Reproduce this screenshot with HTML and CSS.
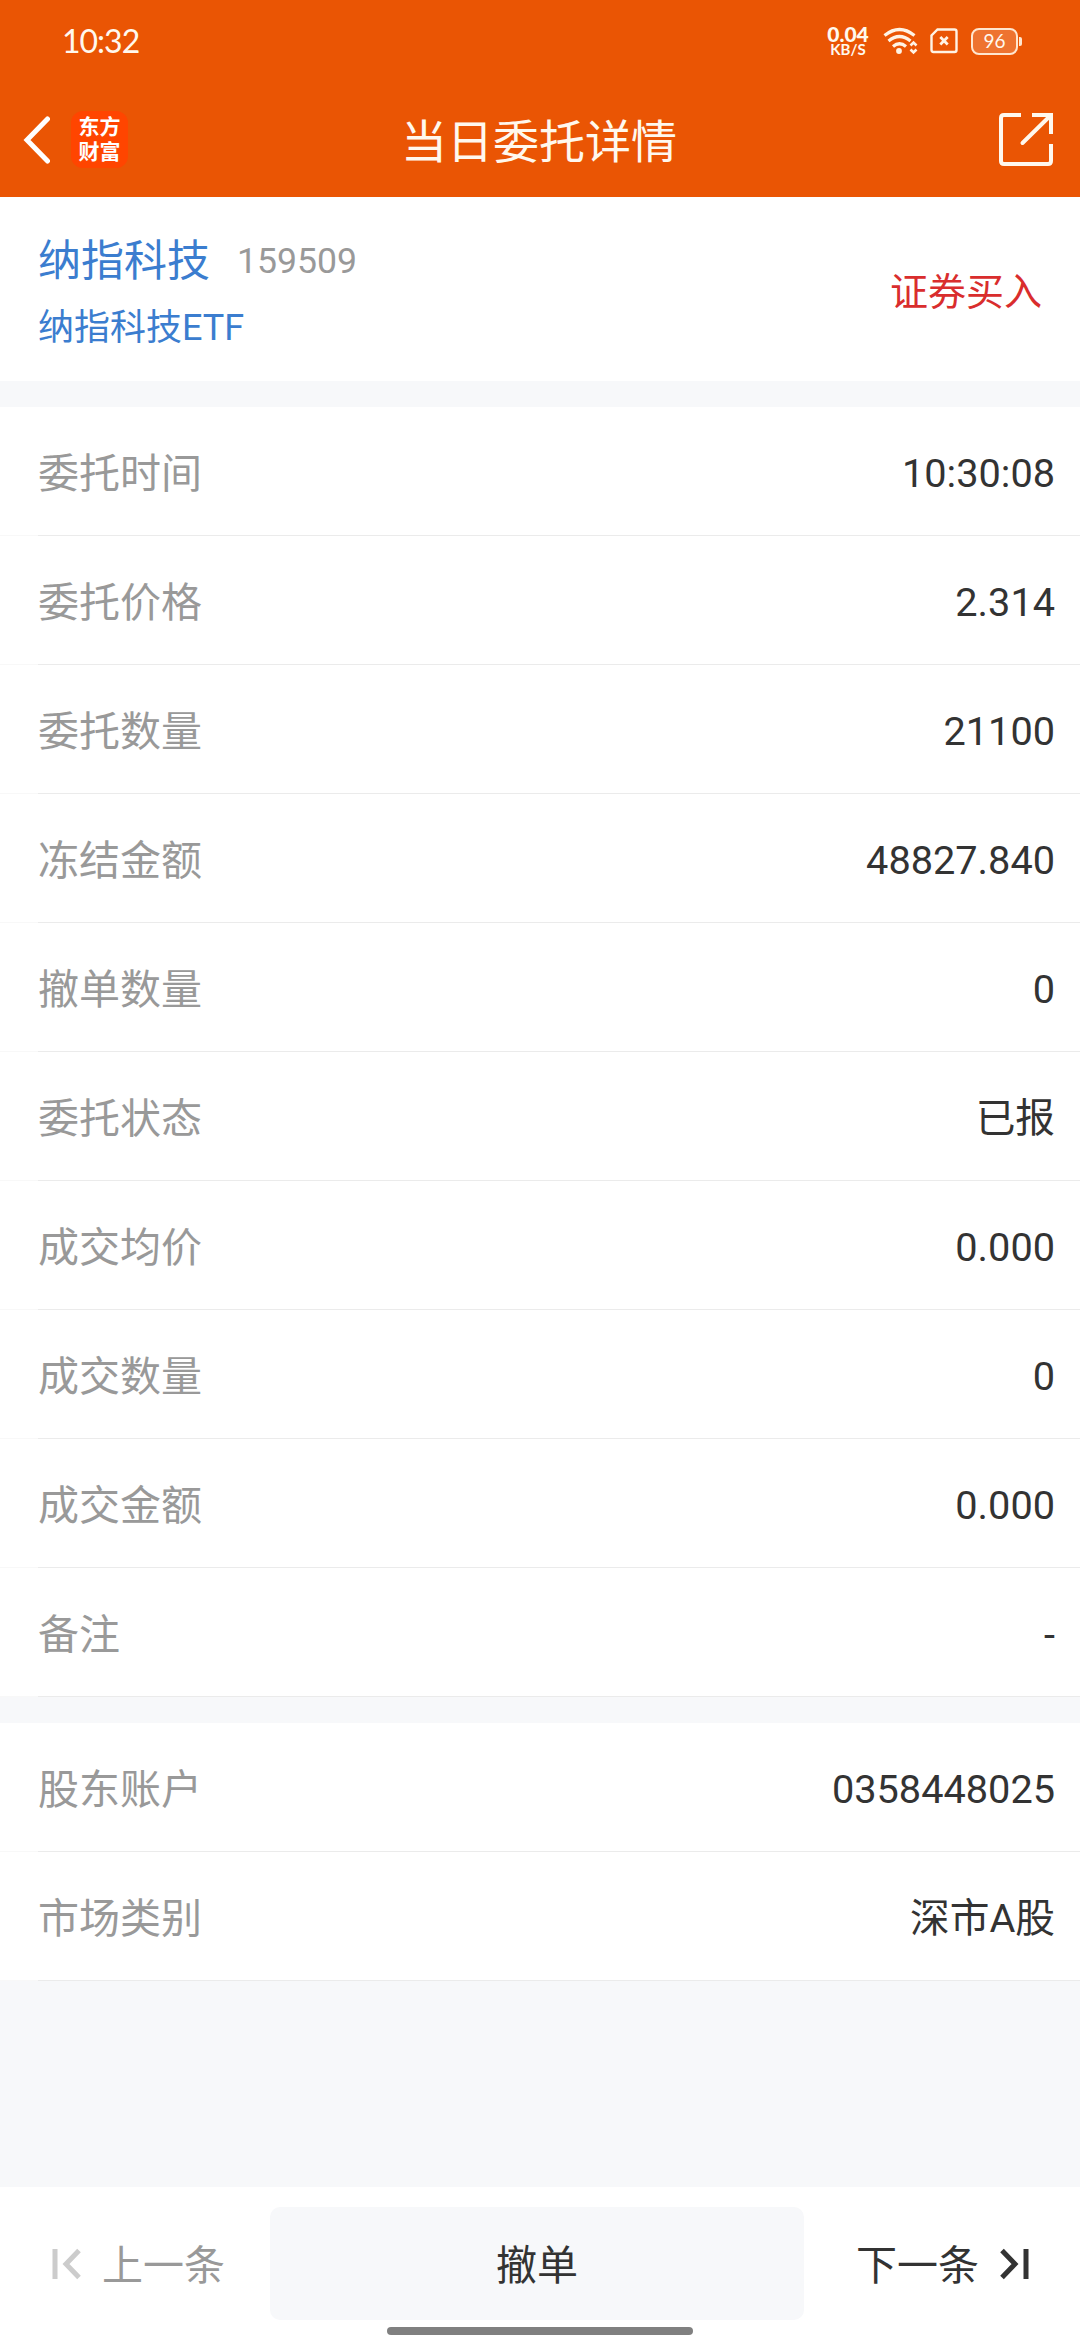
FILE: index.html
```html
<!DOCTYPE html>
<html lang="zh-CN">
<head>
  <meta charset="UTF-8">
  <meta name="viewport" content="width=device-width, initial-scale=1.0">
  <title>当日委托详情</title>
  <link rel="stylesheet" href="styles.css">
</head>
<body>
  <header class="header">
    <div class="status-bar">
      <span class="clock">10:32</span>
      <div class="status-icons">
        <div class="speed"><b>0.04</b><span>KB/S</span></div>
        <svg class="wifi" width="36" height="28" viewBox="0 0 36 28" fill="none" stroke="#fff3e4" stroke-width="3.2">
          <path d="M1.5 8.5Q16.5 -3.5 31.5 8.5"/>
          <path d="M5.5 14Q16.5 5 27.5 14"/>
          <path d="M10 19.5Q16.5 14 23 19.5"/>
          <circle cx="16" cy="24" r="2.9" fill="#fff3e4" stroke="none"/>
          <path d="M27.5 18.5L30.5 15.5L33.5 18.5M27.5 22.5L30.5 25.5L33.5 22.5" stroke-width="2.6"/>
        </svg>
        <svg class="sim" width="28" height="26" viewBox="0 0 28 26" fill="none" stroke="#fff3e4" stroke-width="2.4">
          <path d="M7.5 1.5H24.5Q26.5 1.5 26.5 3.5V22Q26.5 24 24.5 24H3.5Q1.5 24 1.5 22V7.5Z"/>
          <path d="M10.3 9L17.7 16.4M17.7 9L10.3 16.4" stroke-width="2.8"/>
        </svg>
        <div class="battery">96</div>
      </div>
    </div>
    <div class="nav-bar">
      <div class="nav-left">
        <svg width="28" height="48" viewBox="0 0 28 48" fill="none" stroke="#fff" stroke-width="5" stroke-linecap="round">
          <path d="M25.5 3L5 24L25.5 45"/>
        </svg>
        <div class="logo">东方<br>财富</div>
      </div>
      <h1>当日委托详情</h1>
      <svg class="share" width="56" height="56" viewBox="0 0 56 56" fill="none" stroke="#fff8ee" stroke-width="4">
        <path d="M23 3H6Q3 3 3 6V49Q3 52 6 52H50Q53 52 53 49V32"/>
        <path d="M34 3H53V22"/>
        <path d="M52 4L24.5 31" stroke-linecap="round"/>
      </svg>
    </div>
  </header>

  <main>
    <section class="summary">
      <div>
        <p class="stock"><span class="stock-name">纳指科技</span><span class="stock-code">159509</span></p>
        <p class="stock-full">纳指科技ETF</p>
      </div>
      <span class="side">证券买入</span>
    </section>

    <section class="list">
      <div class="row"><span class="label">委托时间</span><span class="value">10:30:08</span></div>
      <div class="row"><span class="label">委托价格</span><span class="value">2.314</span></div>
      <div class="row"><span class="label">委托数量</span><span class="value">21100</span></div>
      <div class="row"><span class="label">冻结金额</span><span class="value">48827.840</span></div>
      <div class="row"><span class="label">撤单数量</span><span class="value">0</span></div>
      <div class="row"><span class="label">委托状态</span><span class="value">已报</span></div>
      <div class="row"><span class="label">成交均价</span><span class="value">0.000</span></div>
      <div class="row"><span class="label">成交数量</span><span class="value">0</span></div>
      <div class="row"><span class="label">成交金额</span><span class="value">0.000</span></div>
      <div class="row"><span class="label">备注</span><span class="value">-</span></div>
    </section>

    <section class="list">
      <div class="row"><span class="label">股东账户</span><span class="value">0358448025</span></div>
      <div class="row"><span class="label">市场类别</span><span class="value">深市A股</span></div>
    </section>
  </main>

  <footer class="footer">
    <div class="pager prev">
      <svg width="30" height="32" viewBox="0 0 30 32" fill="none" stroke="#ccc" stroke-width="5">
        <path d="M3 1V31M27 2.5L14 16L27 29.5"/>
      </svg>
      <span>上一条</span>
    </div>
    <button class="cancel">撤单</button>
    <div class="pager next">
      <span>下一条</span>
      <svg width="30" height="32" viewBox="0 0 30 32" fill="none" stroke="#333" stroke-width="5">
        <path d="M3 2.5L16 16L3 29.5M27 1V31"/>
      </svg>
    </div>
    <div class="home-bar"></div>
  </footer>
</body>
</html>
```
FILE: styles.css
```css
*, *:before, *:after{
  padding: 0;
  margin: 0;
  box-sizing: border-box;
}
body{
  height: 2340px;
  background: #f7f8fa;
  font-family: Roboto, "Noto Sans CJK SC", sans-serif;
  color: #333;
  display: flex;
  flex-direction: column;
}
svg{
  display: block;
  flex-shrink: 0;
}

/* Header */
.header{
  height: 197px;
  background: #ea5504;
  color: #fff8ee;
}
.status-bar{
  height: 82px;
  padding: 0 57px 0 62px;
  display: flex;
  justify-content: space-between;
  align-items: center;
}
.clock{
  font-family: Lato, sans-serif;
  font-size: 32px;
  letter-spacing: -1px;
  padding-bottom: 2px;
}
.status-icons{
  display: flex;
  align-items: center;
}
.speed{
  width: 44px;
  font-family: Lato, sans-serif;
  font-weight: bold;
  text-align: center;
  margin-right: 13px;
}
.speed b{
  display: block;
  font-size: 21px;
  line-height: 17px;
}
.speed span{
  display: block;
  font-size: 15px;
  line-height: 15px;
}
.wifi{
  margin-right: 11px;
}
.sim{
  margin-right: 13px;
}
.battery{
  width: 47px;
  height: 27px;
  margin-right: 5px;
  border: 2px solid #ffe6cf;
  border-radius: 8px;
  background: #ee7330;
  font-family: Lato, sans-serif;
  font-size: 19px;
  line-height: 21px;
  text-align: center;
  position: relative;
}
.battery:after{
  content: "";
  position: absolute;
  right: -6px;
  top: 7px;
  width: 3px;
  height: 9px;
  border-radius: 0 2px 2px 0;
  background: #ffe6cf;
}
.nav-bar{
  height: 115px;
  padding: 0 26px 0 22px;
  display: flex;
  justify-content: space-between;
  align-items: center;
}
.nav-left{
  width: 110px;
  display: flex;
  align-items: center;
  gap: 21px;
}
.logo{
  width: 57px;
  height: 57px;
  padding-top: 2px;
  border-radius: 12px;
  background: #ff4500;
  color: #fff;
  font-family: "Noto Sans CJK SC", sans-serif;
  font-size: 21px;
  font-weight: bold;
  line-height: 25px;
  text-align: center;
}
.nav-bar h1{
  flex: 1;
  padding: 5px 0 0 54px;
  margin-right: 106px;
  font-size: 46px;
  line-height: 54px;
  font-weight: normal;
  text-align: center;
  white-space: nowrap;
}

/* Stock summary */
.summary{
  height: 184px;
  padding: 31px 38px 0 38px;
  background: #fff;
  display: flex;
  justify-content: space-between;
}
.stock{
  height: 66px;
  display: flex;
  gap: 27px;
  line-height: 66px;
}
.stock-name{
  font-size: 43px;
  color: #3b7dcf;
}
.stock-code{
  font-size: 35.6px;
  color: #999;
}
.stock-full{
  font-size: 36px;
  line-height: 69px;
  color: #3b7dcf;
}
.side{
  font-size: 38px;
  line-height: 128px;
  color: #d92d2d;
}

/* Detail rows */
.list{
  margin-top: 26px;
  background: #fff;
}
.row{
  height: 129px;
  padding: 5px 25px 0 38px;
  display: flex;
  justify-content: space-between;
  align-items: center;
  line-height: 48px;
  background: linear-gradient(90deg, #f8f8f8 38px, #ebebeb 38px) 0 100% / 100% 1px no-repeat;
}
.label{
  font-size: 41px;
  color: #999;
}
.value{
  font-size: 39.7px;
}

/* Footer */
.footer{
  height: 153px;
  margin-top: auto;
  padding-top: 20px;
  background: #fff;
  display: flex;
  position: relative;
  font-size: 41px;
  line-height: 48px;
}
.pager{
  height: 113px;
  display: flex;
  align-items: center;
  gap: 20px;
}
.pager span{
  padding-top: 5px;
}
.prev{
  width: 270px;
  padding-left: 52px;
  color: #999;
}
.next{
  width: 276px;
  padding-left: 52px;
}
.cancel{
  width: 534px;
  height: 113px;
  padding-top: 5px;
  border: none;
  border-radius: 10px;
  background: #f7f8fa;
  font: inherit;
  color: #333;
}
.home-bar{
  position: absolute;
  left: 387px;
  bottom: 5px;
  width: 306px;
  height: 8px;
  border-radius: 4px;
  background: #808080;
}
```
